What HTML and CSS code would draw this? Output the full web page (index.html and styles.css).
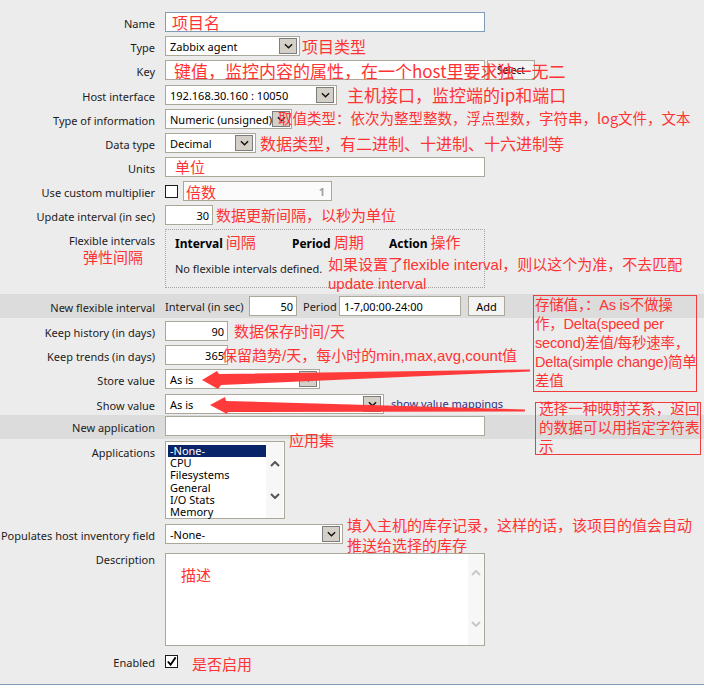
FILE: index.html
```html
<!DOCTYPE html>
<html lang="zh-CN">
<head>
    <meta charset="UTF-8">
    <meta name="viewport" content="width=device-width, initial-scale=1.0">
    <title>Item configuration</title>
    <link rel="stylesheet" href="styles.css">
</head>
<body>
<div class="page">
    <form class="item-form">
        <div class="row">
            <label class="lbl">Name</label>
            <div class="field">
                <input class="text w-wide focus" type="text" value="">
                <span class="note over n-name lg">项目名</span>
            </div>
        </div>

        <div class="row">
            <label class="lbl">Type</label>
            <div class="field">
                <div class="select sel-type"><span>Zabbix agent</span><i class="sel-btn"><svg viewBox="0 0 10 6"><polyline points="1,1 5,5 9,1"/></svg></i></div>
                <span class="note lg n-type">项目类型</span>
            </div>
        </div>

        <div class="row row-key">
            <label class="lbl">Key</label>
            <div class="field">
                <input class="text w-wide" type="text" value="">
                <button type="button" class="btn btn-select">Select</button>
                <span class="note over n-key">键值，监控内容的属性，在一个host里要求独一无二</span>
            </div>
        </div>

        <div class="row">
            <label class="lbl">Host interface</label>
            <div class="field">
                <div class="select sel-host"><span>192.168.30.160 : 10050</span><i class="sel-btn"><svg viewBox="0 0 10 6"><polyline points="1,1 5,5 9,1"/></svg></i></div>
                <span class="note n-host">主机接口，监控端的ip和端口</span>
            </div>
        </div>

        <div class="row">
            <label class="lbl">Type of information</label>
            <div class="field">
                <div class="select sel-info"><span>Numeric (unsigned)</span><i class="sel-btn"><svg viewBox="0 0 10 6"><polyline points="1,1 5,5 9,1"/></svg></i></div>
                <span class="note over n-info">取值类型：依次为整型整数，浮点型数，字符串，log文件，文本</span>
            </div>
        </div>

        <div class="row">
            <label class="lbl">Data type</label>
            <div class="field">
                <div class="select sel-dtype"><span>Decimal</span><i class="sel-btn"><svg viewBox="0 0 10 6"><polyline points="1,1 5,5 9,1"/></svg></i></div>
                <span class="note lg n-dtype">数据类型，有二进制、十进制、十六进制等</span>
            </div>
        </div>

        <div class="row">
            <label class="lbl">Units</label>
            <div class="field">
                <input class="text w-wide" type="text" value="">
                <span class="note over n-units">单位</span>
            </div>
        </div>

        <div class="row">
            <label class="lbl">Use custom multiplier</label>
            <div class="field">
                <span class="check"></span>
                <input class="text num w-mult" type="text" value="1" disabled>
                <span class="note over n-mult">倍数</span>
            </div>
        </div>

        <div class="row">
            <label class="lbl">Update interval (in sec)</label>
            <div class="field">
                <input class="text num w-small" type="text" value="30">
                <span class="note n-update">数据更新间隔，以秒为单位</span>
            </div>
        </div>

        <div class="row">
            <label class="lbl">
                <span>Flexible intervals</span>
                <span class="note lbl-note">弹性间隔</span>
            </label>
            <div class="field field-top">
                <div class="flex-box">
                    <div class="fi-head">
                        <div class="fi-col1"><b>Interval</b><span class="note">间隔</span></div>
                        <div class="fi-col2"><b>Period</b><span class="note">周期</span></div>
                        <div><b>Action</b><span class="note">操作</span></div>
                    </div>
                    <div class="fi-empty">No flexible intervals defined.</div>
                    <span class="note over thin n-flex">如果设置了flexible interval，则以这个为准，不去匹配<br>update interval</span>
                </div>
            </div>
        </div>

        <div class="row row-newflex">
            <label class="lbl">New flexible interval</label>
            <div class="field">
                <span class="nf-lbl">Interval (in sec)</span>
                <input class="text num w-small" type="text" value="50">
                <span class="nf-period">Period</span>
                <input class="text w-period" type="text" value="1-7,00:00-24:00">
                <button type="button" class="btn btn-add">Add</button>
            </div>
        </div>

        <div class="row row-history">
            <label class="lbl">Keep history (in days)</label>
            <div class="field">
                <input class="text num w-days" type="text" value="90">
                <span class="note n-hist">数据保存时间/天</span>
            </div>
        </div>

        <div class="row">
            <label class="lbl">Keep trends (in days)</label>
            <div class="field">
                <input class="text num w-days" type="text" value="365">
                <span class="note over thin n-trends">保留趋势/天，每小时的min,max,avg,count值</span>
            </div>
        </div>

        <div class="row">
            <label class="lbl">Store value</label>
            <div class="field">
                <div class="select sel-store"><span>As is</span><i class="sel-btn"><svg viewBox="0 0 10 6"><polyline points="1,1 5,5 9,1"/></svg></i></div>
            </div>
        </div>

        <div class="row row-show">
            <label class="lbl">Show value</label>
            <div class="field">
                <div class="select sel-show"><span>As is</span><i class="sel-btn"><svg viewBox="0 0 10 6"><polyline points="1,1 5,5 9,1"/></svg></i></div>
                <a class="link" href="#">show value mappings</a>
            </div>
        </div>

        <div class="row row-newapp">
            <label class="lbl">New application</label>
            <div class="field">
                <input class="text w-wide" type="text" value="">
            </div>
        </div>

        <div class="row">
            <label class="lbl">Applications</label>
            <div class="field field-top">
                <div class="listbox">
                    <ul class="list-items">
                        <li class="selected">-None-</li>
                        <li>CPU</li>
                        <li>Filesystems</li>
                        <li>General</li>
                        <li>I/O Stats</li>
                        <li>Memory</li>
                    </ul>
                    <div class="scroll">
                        <svg viewBox="0 0 10 6"><polyline points="1,5 5,1 9,5"/></svg>
                        <svg viewBox="0 0 10 6"><polyline points="1,1 5,5 9,1"/></svg>
                    </div>
                </div>
                <span class="note over n-apps">应用集</span>
            </div>
        </div>

        <div class="row row-inv">
            <label class="lbl">Populates host inventory field</label>
            <div class="field">
                <div class="select sel-inv"><span>-None-</span><i class="sel-btn"><svg viewBox="0 0 10 6"><polyline points="1,1 5,5 9,1"/></svg></i></div>
                <span class="note over n-inv">填入主机的库存记录，这样的话，该项目的值会自动<br>推送给选择的库存</span>
            </div>
        </div>

        <div class="row row-desc">
            <label class="lbl">Description</label>
            <div class="field field-top">
                <div class="textarea">
                    <div class="scroll scroll-light">
                        <svg viewBox="0 0 10 6"><polyline points="1,5 5,1 9,5"/></svg>
                        <svg viewBox="0 0 10 6"><polyline points="1,1 5,5 9,1"/></svg>
                    </div>
                </div>
                <span class="note over n-desc">描述</span>
            </div>
        </div>

        <div class="row row-enabled">
            <label class="lbl">Enabled</label>
            <div class="field">
                <span class="check checked"><svg viewBox="0 0 12 12"><polyline points="2,6 5,9.5 10.5,1.5"/></svg></span>
                <span class="note n-enabled">是否启用</span>
            </div>
        </div>
    </form>
    <div class="foot-line"></div>

    <!-- annotations drawn over the form -->
    <div class="callout callout-store">
        <div class="callout-text">存储值，：As is不做操<br>作，Delta(speed per<br>second)差值/每秒速率，<br>Delta(simple change)简单<br>差值</div>
    </div>
    <div class="callout callout-show">
        <div class="callout-text">选择一种映射关系，返回<br>的数据可以用指定字符表<br>示</div>
    </div>
    <svg class="arrows" viewBox="0 0 704 685">
        <polygon points="202,380 217,371 219,374 530,369.5 530,371.5 221,385 218,389"/>
        <polygon points="210,405 225,397 226,401 525,409.5 525,411.5 228,412 227,414"/>
    </svg>
</div>
</body>
</html>
```

FILE: styles.css
```css
* {
    box-sizing: border-box;
}

body {
    margin: 0;
    background: #ececec;
    color: #1c1c1c;
    font-family: "Noto Sans", "DejaVu Sans", sans-serif;
    font-size: 11px;
}

.page {
    position: relative;
    width: 704px;
    height: 685px;
    overflow: hidden;
}

.item-form {
    padding-top: 10px;
}

.row {
    display: grid;
    grid-template-columns: 155px 1fr;
    column-gap: 10px;
    padding: 2px 0;
}

.lbl {
    text-align: right;
    line-height: 17px;
    padding-top: 3px;
    white-space: nowrap;
}

.field {
    position: relative;
    display: flex;
    align-items: center;
    min-height: 20px;
}

.field-top {
    align-items: flex-start;
}

/* form controls */
.text {
    height: 20px;
    border: 1px solid #aca899;
    background: #fff;
    padding: 0 4px;
    font: inherit;
    color: #000;
    outline: none;
}

.text.focus {
    border-color: #7f9db9;
}

.text.num {
    text-align: right;
    padding-right: 3px;
}

.text:disabled {
    background: #fbfbfb;
    color: #a0a0a0;
    font-weight: bold;
    padding-right: 6px;
}

.w-wide { width: 320px; }
.w-small { width: 48px; }
.w-days { width: 63px; }
.w-mult { width: 149px; margin-left: 5px; }
.w-period { width: 122px; }

.btn {
    height: 20px;
    border: 1px solid #aca899;
    background: #f4f4f4;
    font-family: inherit;
    font-size: 11px;
    color: #000;
    padding: 0;
}

.btn-select {
    width: 48px;
    margin-left: 2px;
    font-size: 10px;
}

.btn-add {
    width: 37px;
    margin-left: 7px;
}

.select {
    height: 20px;
    border: 1px solid #aca899;
    background: #fff;
    display: flex;
    align-items: center;
    justify-content: space-between;
    padding: 0 2px 0 4px;
    color: #000;
    white-space: nowrap;
}

.sel-btn {
    flex: none;
    width: 18px;
    height: 16px;
    border: 1px solid #7c7c7c;
    background: #d4d0c8;
    display: flex;
    align-items: center;
    justify-content: center;
}

.sel-btn svg {
    width: 9px;
    height: 6px;
    fill: none;
    stroke: #111;
    stroke-width: 1.6;
}

.sel-type { width: 135px; }
.sel-host { width: 172px; }
.sel-info { width: 127px; }
.sel-dtype { width: 91px; }
.sel-store { width: 155px; }
.sel-show { width: 219px; }
.sel-inv { width: 178px; }

.check {
    flex: none;
    width: 13px;
    height: 13px;
    border: 1px solid #1c1c1c;
    background: #fff;
    display: flex;
    align-items: center;
    justify-content: center;
}

.check svg {
    width: 11px;
    height: 11px;
    fill: none;
    stroke: #000;
    stroke-width: 2;
}

.link {
    margin-left: 7px;
    margin-top: -2px;
    color: #2f2f7f;
    text-decoration: underline;
}

/* flexible intervals */
.flex-box {
    position: relative;
    width: 320px;
    height: 59px;
    border: 1px dotted #a4a4a4;
    padding: 2px 9px;
}

.fi-head {
    display: flex;
    line-height: 20px;
}

.fi-head b {
    font-weight: bold;
    font-size: 12px;
    color: #000;
    margin-right: 3px;
}

.fi-col1 { width: 117px; }
.fi-col2 { width: 97px; }

.fi-empty {
    margin-top: 5px;
    line-height: 20px;
}

.row-key { padding-bottom: 3px; }

.row-newflex {
    margin-top: 4px;
    background: #dcdcdc;
}

.nf-lbl {
    width: 84px;
    white-space: nowrap;
}

.nf-period {
    width: 36px;
    margin-left: 6px;
}

.row-history { padding-top: 3px; }
.row-show { padding-top: 3px; padding-bottom: 1px; }

.row-newapp {
    background: #dcdcdc;
    padding: 1px 0 3px;
}

.row-inv { padding-top: 3px; }
.row-desc { padding-top: 7px; padding-bottom: 0; }
.row-desc .lbl { line-height: 12px; padding-top: 1px; }
.row-enabled { padding-top: 5px; padding-bottom: 13px; }

/* list box and text area */
.listbox {
    width: 120px;
    height: 78px;
    border: 1px solid #aca899;
    background: #fff;
    display: flex;
}

.list-items {
    list-style: none;
    margin: 0;
    padding: 3px 0 0 2px;
    width: 100px;
}

.list-items li {
    line-height: 12.2px;
    padding-left: 2px;
    color: #000;
}

.list-items li.selected {
    background: #0a246a;
    color: #fff;
}

.scroll {
    width: 17px;
    background: #f7f7f7;
    display: flex;
    flex-direction: column;
    align-items: center;
    justify-content: space-around;
    padding: 6px 0;
}

.scroll svg {
    width: 10px;
    height: 6px;
    fill: none;
    stroke: #555;
    stroke-width: 2;
}

.textarea {
    width: 320px;
    height: 93px;
    border: 1px solid #aca899;
    background: #fff;
    display: flex;
    justify-content: flex-end;
}

.scroll-light {
    width: 16px;
    padding: 16px 0 18px;
    justify-content: space-between;
}

.scroll-light svg {
    stroke: #c8c8c8;
}

.foot-line {
    height: 1px;
    background: #7f9db9;
}

/* red annotations */
.note {
    color: #ff3333;
    font-family: "Noto Sans CJK SC", "Noto Sans", sans-serif;
    font-size: 15px;
    line-height: 20px;
    white-space: nowrap;
}

.note.lg {
    font-size: 16px;
}

.note.thin {
    font-family: "Liberation Sans", "Noto Sans CJK SC", sans-serif;
}

.note.over {
    position: absolute;
}

.n-name { left: 7px; top: 0; }
.n-key { left: 9px; top: 1px; font-size: 17px; }
.n-info { left: 113px; top: -1px; font-size: 14.5px; }
.n-units { left: 10px; top: 0; }
.n-mult { left: 21px; top: 1px; }
.n-trends { left: 57px; top: 1px; }
.n-apps { left: 124px; top: -11px; }
.n-inv { left: 182px; top: -9px; }
.n-desc { left: 16px; top: 12px; }

.n-flex {
    left: 162px;
    top: 25px;
    line-height: 19px;
}

.n-type { margin-left: 2px; }
.n-host { margin-left: 10px; font-size: 17px; }
.n-dtype { margin-left: 4px; }
.n-update { margin-left: 3px; }
.n-hist { margin-left: 6px; }

.n-enabled {
    margin-left: 14px;
    transform: translateY(3px);
}

.lbl-note {
    display: block;
    line-height: 16px;
    margin-top: 0;
    padding-right: 12px;
}

.callout {
    position: absolute;
    border: 1px solid #f03c3c;
    color: #ff3333;
    font-family: "Liberation Sans", "Noto Sans CJK SC", sans-serif;
    font-size: 14.5px;
    line-height: 19px;
    white-space: nowrap;
}

.callout-text {
    padding-left: 1px;
}

.callout-store {
    left: 533px;
    top: 295px;
    width: 164px;
    height: 97px;
}

.callout-store .callout-text {
    letter-spacing: -0.2px;
}

.callout-show {
    left: 535px;
    top: 402px;
    width: 166px;
    height: 53px;
}

.callout-show .callout-text {
    margin-top: -3px;
    padding-left: 3px;
    font-size: 14.6px;
}

.arrows {
    position: absolute;
    left: 0;
    top: 0;
    width: 704px;
    height: 685px;
    pointer-events: none;
}

.arrows polygon {
    fill: #ff3a3a;
}
```
